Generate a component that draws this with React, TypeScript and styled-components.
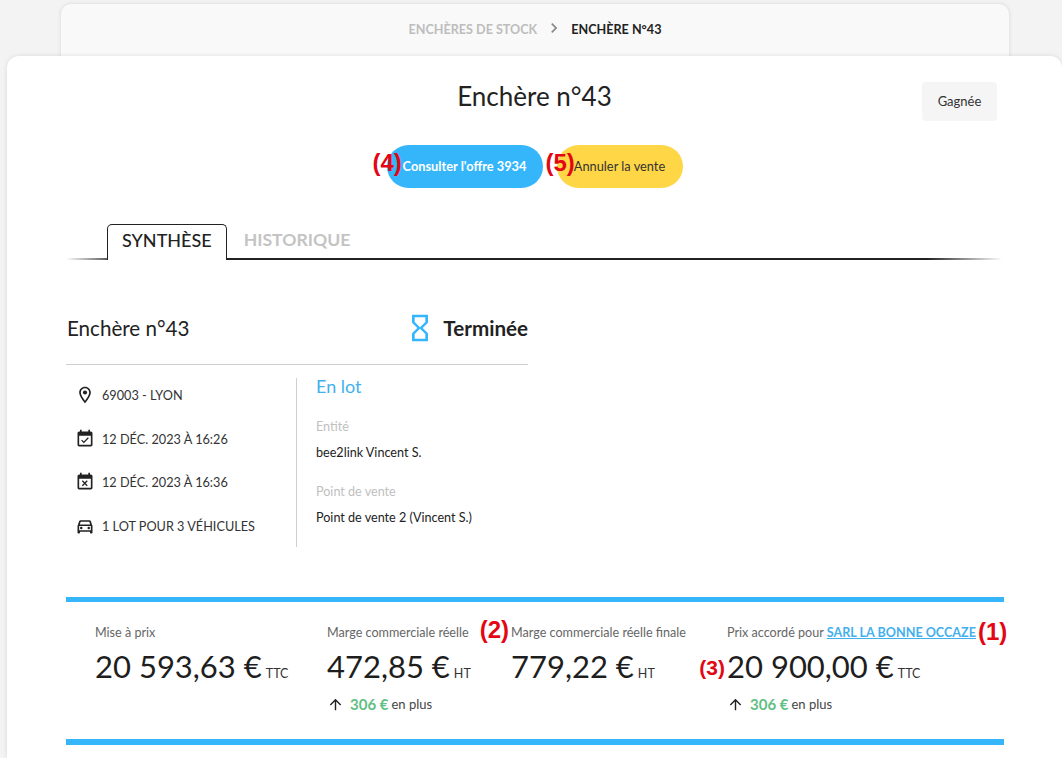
import React from "react";
import styled, { createGlobalStyle } from "styled-components";
import {
    MdArrowUpward,
    MdChevronRight,
    MdEventAvailable,
    MdEventBusy,
    MdOutlineDirectionsCar,
    MdOutlineHourglassEmpty,
    MdOutlineLocationOn,
} from "react-icons/md";

const GlobalStyle = createGlobalStyle`
    html, body {
        margin: 0;
        background: #f3f3f3;
        font-family: Lato, "Liberation Sans", sans-serif;
        color: #222;
        overflow: hidden;
    }
`;

const Page = styled.div`
    width: 1062px;
    height: 758px;
    overflow: hidden;
    display: flex;
    flex-direction: column;
    box-sizing: border-box;
    padding-top: 4px;
`;

const Breadcrumb = styled.nav`
    width: 948px;
    height: 60px;
    margin: 0 0 -8px 61px;
    box-sizing: border-box;
    padding-bottom: 10px;
    background: #f9f9f9;
    border-radius: 10px 10px 0 0;
    box-shadow: 0 0 4px rgba(0, 0, 0, 0.12);
    display: flex;
    align-items: center;
    justify-content: center;
    gap: 7px;
    font-size: 12.6px;
    font-weight: 700;
`;

const Crumb = styled.span<{ $active?: boolean }>`
    color: ${(p) => (p.$active ? "#222" : "#bdbdbd")};
`;

const CrumbArrow = styled(MdChevronRight)`
    color: #8a8a8a;
    font-size: 20px;
    margin-top: -3px;
`;

const Card = styled.main`
    position: relative;
    flex: 1;
    margin-left: 7px;
    background: #fff;
    border-radius: 12px 12px 0 0;
    box-shadow: 0 0 5px rgba(0, 0, 0, 0.1);
`;

const TitleRow = styled.header`
    display: grid;
    grid-template-columns: 1fr auto 1fr;
    padding-top: 26px;
`;

const Title = styled.h1`
    grid-column: 2;
    margin: -1px 0 0;
    font-size: 26px;
    line-height: 30px;
    font-weight: 400;
`;

const StatusBadge = styled.div`
    justify-self: end;
    width: 75px;
    height: 39px;
    margin-right: 65px;
    box-sizing: border-box;
    padding-bottom: 2px;
    background: #f5f5f5;
    border-radius: 4px;
    display: flex;
    align-items: center;
    justify-content: center;
    font-size: 13px;
    color: #333;
`;

const Actions = styled.div`
    display: flex;
    justify-content: center;
    gap: 14px;
    margin-top: 24px;
`;

const PillButton = styled.button<{ $variant: "blue" | "yellow" }>`
    position: relative;
    height: 43px;
    width: ${(p) => (p.$variant === "blue" ? "156px" : "126px")};
    border: 0;
    border-radius: 22px;
    padding: 0 0 2px;
    background: ${(p) => (p.$variant === "blue" ? "#35b6fb" : "#ffd646")};
    color: ${(p) => (p.$variant === "blue" ? "#fff" : "#333")};
    font-family: inherit;
    font-size: 12.8px;
    font-weight: ${(p) => (p.$variant === "blue" ? 700 : 400)};
`;

const Annotation = styled.span<{ $size?: number }>`
    position: absolute;
    font-family: "Liberation Sans", Arial, sans-serif;
    font-weight: 700;
    font-size: ${(p) => p.$size ?? 24}px;
    line-height: 1;
    color: #e30613;
    white-space: nowrap;
`;

const ButtonMark = styled(Annotation)<{ $left: number }>`
    left: ${(p) => p.$left}px;
    top: 6px;
`;

const Tabs = styled.div`
    position: relative;
    display: flex;
    align-items: flex-end;
    height: 36px;
    margin: 36px 0 0 59px;
    width: 936px;
    padding-left: 41px;
    box-sizing: border-box;
    &::after {
        content: "";
        position: absolute;
        left: 0;
        right: 0;
        bottom: 0;
        height: 2px;
        background: linear-gradient(
            90deg,
            rgba(34, 34, 34, 0) 0,
            #222 6%,
            #222 92%,
            rgba(34, 34, 34, 0) 100%
        );
    }
`;

const Tab = styled.div<{ $active?: boolean }>`
    position: relative;
    z-index: 1;
    box-sizing: border-box;
    height: 36px;
    padding: 0 ${(p) => (p.$active ? "14px 5px" : "17px")};
    display: flex;
    align-items: center;
    font-size: ${(p) => (p.$active ? "18px" : "17.6px")};
    font-weight: ${(p) => (p.$active ? 500 : 700)};
    color: ${(p) => (p.$active ? "#222" : "#c4c4c4")};
    background: #fff;
    ${(p) =>
        p.$active
            ? "border: 1px solid #222; border-bottom: 0; border-radius: 5px 5px 0 0;"
            : "height: 30px; background: transparent; margin-bottom: 6px;"}
`;

const Summary = styled.section`
    width: 462px;
    margin: 50px 0 0 59px;
`;

const SummaryHead = styled.div`
    display: flex;
    align-items: center;
    justify-content: space-between;
    height: 36px;
    padding-bottom: 18px;
    border-bottom: 1px solid #cfcfcf;
`;

const SummaryTitle = styled.h2`
    margin: 0;
    padding-left: 1px;
    font-size: 20.6px;
    font-weight: 400;
`;

const StateLabel = styled.div`
    display: flex;
    align-items: center;
    gap: 7px;
    font-size: 20.6px;
    font-weight: 700;
    svg {
        color: #35b6fb;
        font-size: 32px;
    }
`;

const SummaryBody = styled.div`
    display: grid;
    grid-template-columns: 231px 1fr;
    margin-top: 13px;
`;

const Facts = styled.ul`
    list-style: none;
    margin: 0;
    box-sizing: border-box;
    height: 169px;
    padding: 4px 0 8px 9px;
    border-right: 1px solid #cfcfcf;
    display: flex;
    flex-direction: column;
    justify-content: space-between;
`;

const Fact = styled.li`
    display: flex;
    align-items: center;
    gap: 7px;
    height: 26px;
    font-size: 12.7px;
    color: #333;
    svg {
        font-size: 20px;
        color: #222;
    }
`;

const Details = styled.div`
    padding-left: 19px;
    margin-top: -2px;
`;

const LotTitle = styled.div`
    font-size: 18px;
    line-height: 20px;
    color: #43b0ee;
    margin-bottom: 23px;
`;

const DetailLabel = styled.div`
    font-size: 12.6px;
    line-height: 16px;
    color: #c0c0c0;
    margin-bottom: 10px;
`;

const DetailValue = styled.div`
    font-size: 12.6px;
    line-height: 16px;
    color: #222;
    margin-bottom: 23px;
    &:last-child {
        margin-bottom: 0;
    }
`;

const Stats = styled.section`
    box-sizing: border-box;
    width: 938px;
    height: 148px;
    margin: 50px 0 0 59px;
    border-top: 5px solid #35b6fb;
    border-bottom: 6px solid #35b6fb;
    padding: 22px 0 0 29px;
    display: grid;
    grid-template-columns: 232px 184px 216px 1fr;
`;

const Stat = styled.div`
    position: relative;
`;

const StatLabel = styled.div`
    font-size: 12.6px;
    line-height: 18px;
    color: #666;
    white-space: nowrap;
    a {
        color: #43b0ee;
        font-weight: 700;
        text-decoration: underline;
    }
`;

const StatValue = styled.div`
    margin-top: 5px;
    font-size: 31px;
    line-height: 38px;
    color: #1e1e1e;
    white-space: nowrap;
`;

const Unit = styled.small`
    font-size: 12.5px;
    margin-left: 4px;
    color: #333;
`;

const Delta = styled.div`
    display: flex;
    align-items: center;
    margin-top: 2px;
    font-size: 13px;
    color: #444;
    svg {
        font-size: 17px;
        color: #222;
        margin-right: 6px;
    }
    b {
        font-size: 15px;
        color: #62c084;
        margin-right: 3px;
    }
`;

const LabelMark = styled(Annotation)`
    right: 100%;
    margin-right: 2px;
    top: -6px;
`;

const LinkMark = styled(Annotation)`
    left: 251px;
    top: -4px;
`;

const ValueMark = styled(Annotation)`
    right: 100%;
    margin-right: 2px;
    top: 33px;
`;

const App = () => {
    return (
        <Page>
            <GlobalStyle />
            <Breadcrumb>
                <Crumb>ENCHÈRES DE STOCK</Crumb>
                <CrumbArrow />
                <Crumb $active>ENCHÈRE N°43</Crumb>
            </Breadcrumb>
            <Card>
                <TitleRow>
                    <Title>Enchère n°43</Title>
                    <StatusBadge>Gagnée</StatusBadge>
                </TitleRow>
                <Actions>
                    <PillButton $variant="blue">
                        <ButtonMark $left={-14}>(4)</ButtonMark>
                        Consulter l'offre 3934
                    </PillButton>
                    <PillButton $variant="yellow">
                        <ButtonMark $left={-11}>(5)</ButtonMark>
                        Annuler la vente
                    </PillButton>
                </Actions>
                <Tabs>
                    <Tab $active>SYNTHÈSE</Tab>
                    <Tab>HISTORIQUE</Tab>
                </Tabs>
                <Summary>
                    <SummaryHead>
                        <SummaryTitle>Enchère n°43</SummaryTitle>
                        <StateLabel>
                            <MdOutlineHourglassEmpty />
                            Terminée
                        </StateLabel>
                    </SummaryHead>
                    <SummaryBody>
                        <Facts>
                            <Fact>
                                <MdOutlineLocationOn />
                                69003 - LYON
                            </Fact>
                            <Fact>
                                <MdEventAvailable />
                                12 DÉC. 2023 À 16:26
                            </Fact>
                            <Fact>
                                <MdEventBusy />
                                12 DÉC. 2023 À 16:36
                            </Fact>
                            <Fact>
                                <MdOutlineDirectionsCar />1 LOT POUR 3 VÉHICULES
                            </Fact>
                        </Facts>
                        <Details>
                            <LotTitle>En lot</LotTitle>
                            <DetailLabel>Entité</DetailLabel>
                            <DetailValue>bee2link Vincent S.</DetailValue>
                            <DetailLabel>Point de vente</DetailLabel>
                            <DetailValue>Point de vente 2 (Vincent S.)</DetailValue>
                        </Details>
                    </SummaryBody>
                </Summary>
                <Stats>
                    <Stat>
                        <StatLabel>Mise à prix</StatLabel>
                        <StatValue>
                            20 593,63 €<Unit>TTC</Unit>
                        </StatValue>
                    </Stat>
                    <Stat>
                        <StatLabel>Marge commerciale réelle</StatLabel>
                        <StatValue>
                            472,85 €<Unit>HT</Unit>
                        </StatValue>
                        <Delta>
                            <MdArrowUpward />
                            <b>306 €</b> en plus
                        </Delta>
                    </Stat>
                    <Stat>
                        <LabelMark>(2)</LabelMark>
                        <StatLabel>Marge commerciale réelle finale</StatLabel>
                        <StatValue>
                            779,22 €<Unit>HT</Unit>
                        </StatValue>
                    </Stat>
                    <Stat>
                        <StatLabel>
                            Prix accordé pour <a href="#">SARL LA BONNE OCCAZE</a>
                        </StatLabel>
                        <LinkMark>(1)</LinkMark>
                        <ValueMark $size={21}>(3)</ValueMark>
                        <StatValue>
                            20 900,00 €<Unit>TTC</Unit>
                        </StatValue>
                        <Delta>
                            <MdArrowUpward />
                            <b>306 €</b> en plus
                        </Delta>
                    </Stat>
                </Stats>
            </Card>
        </Page>
    );
};

export default App;
